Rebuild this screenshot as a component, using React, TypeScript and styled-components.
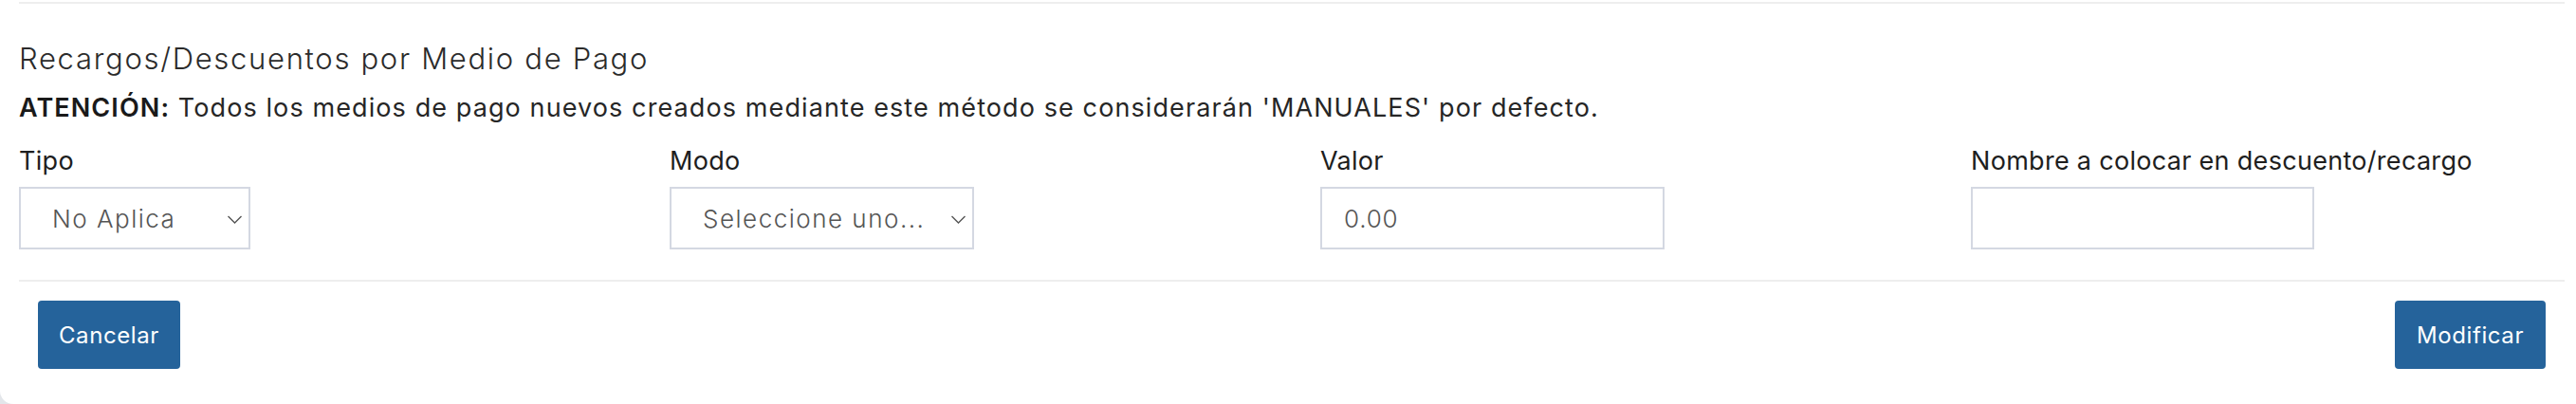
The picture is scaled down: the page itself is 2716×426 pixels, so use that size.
import React from "react";
import styled, { createGlobalStyle } from "styled-components";

const GlobalStyle = createGlobalStyle`
  html, body {
    margin: 0;
    padding: 0;
    background: #e3e6ea;
  }
  body {
    font-family: Inter, "Open Sans", "Liberation Sans", sans-serif;
    color: #212529;
  }
  * { box-sizing: border-box; }
`;

const Card = styled.div`
  width: 2716px;
  height: 426px;
  background: #ffffff;
  border-radius: 0 0 0 14px;
  padding: 2px 12px 0 20px;
  display: flex;
  flex-direction: column;
`;

const Rule = styled.div<{ $mt?: number }>`
  height: 2px;
  background: #eeeeee;
  margin-top: ${(p) => p.$mt ?? 0}px;
  flex: none;
`;

const Body = styled.div`
  display: flex;
  flex-direction: column;
`;

const Title = styled.h4`
  margin: 38px 0 0 0;
  font-size: 31px;
  line-height: 40px;
  font-weight: 300;
  color: #2b2b2b;
  letter-spacing: 1.7px;
`;

const Notice = styled.p`
  margin: 14px 0 0 0;
  font-size: 27px;
  line-height: 36px;
  font-weight: 400;
  color: #262626;
  letter-spacing: 1.1px;
  strong {
    font-weight: 600;
    color: #1a1a1a;
  }
`;

const FieldGrid = styled.div`
  display: grid;
  grid-template-columns: repeat(4, 686px);
  margin-top: 20px;
`;

const Field = styled.div`
  display: flex;
  flex-direction: column;
  align-items: flex-start;
`;

const Label = styled.label`
  font-size: 27px;
  line-height: 36px;
  font-weight: 400;
  color: #1e1e1e;
  letter-spacing: 0.3px;
  margin-bottom: 9px;
`;

const SelectWrap = styled.div<{ $w: number }>`
  position: relative;
  width: ${(p) => p.$w}px;
  height: 66px;
`;

const Select = styled.select`
  appearance: none;
  -webkit-appearance: none;
  width: 100%;
  height: 100%;
  border: 2px solid #d4d8e2;
  border-radius: 0;
  background: #ffffff;
  padding: 0 40px 0 33px;
  font-family: inherit;
  font-size: 26px;
  font-weight: 300;
  color: #555555;
  letter-spacing: 1.5px;
  outline: none;
`;

const Chevron = styled.svg`
  position: absolute;
  right: 8px;
  top: 30px;
  width: 17px;
  height: 9px;
  pointer-events: none;
`;

const Input = styled.input<{ $w: number }>`
  width: ${(p) => p.$w}px;
  height: 66px;
  border: 2px solid #d4d8e2;
  border-radius: 0;
  background: #ffffff;
  padding: 0 23px;
  font-family: inherit;
  font-size: 26px;
  font-weight: 300;
  color: #555555;
  letter-spacing: 0.8px;
  outline: none;
`;

const Footer = styled.div`
  display: flex;
  justify-content: space-between;
  padding: 20px 20px 0 20px;
`;

const Button = styled.button<{ $w: number }>`
  width: ${(p) => p.$w}px;
  height: 72px;
  background: #25639b;
  border: none;
  border-radius: 4px;
  color: #ffffff;
  font-family: inherit;
  font-size: 24px;
  font-weight: 400;
  letter-spacing: 0.6px;
  cursor: pointer;
`;

const Caret = () => (
  <Chevron viewBox="0 0 17 9" fill="none">
    <path d="M1.5 1 L8.5 8 L15.5 1" stroke="#555" strokeWidth="1.4" />
  </Chevron>
);

export default function App() {
  return (
    <>
      <GlobalStyle />
      <Card>
        <Rule />
        <Body>
          <Title>Recargos/Descuentos por Medio de Pago</Title>
          <Notice>
            <strong>ATENCIÓN:</strong> Todos los medios de pago nuevos creados mediante este método se considerarán 'MANUALES' por defecto.
          </Notice>
          <FieldGrid>
            <Field>
              <Label>Tipo</Label>
              <SelectWrap $w={244}>
                <Select defaultValue="na">
                  <option value="na">No Aplica</option>
                </Select>
                <Caret />
              </SelectWrap>
            </Field>
            <Field>
              <Label>Modo</Label>
              <SelectWrap $w={321}>
                <Select defaultValue="">
                  <option value="">Seleccione uno...</option>
                </Select>
                <Caret />
              </SelectWrap>
            </Field>
            <Field>
              <Label>Valor</Label>
              <Input $w={363} defaultValue="0.00" />
            </Field>
            <Field>
              <Label>Nombre a colocar en descuento/recargo</Label>
              <Input $w={362} defaultValue="" />
            </Field>
          </FieldGrid>
        </Body>
        <Rule $mt={32} />
        <Footer>
          <Button $w={150}>Cancelar</Button>
          <Button $w={159}>Modificar</Button>
        </Footer>
      </Card>
    </>
  );
}
